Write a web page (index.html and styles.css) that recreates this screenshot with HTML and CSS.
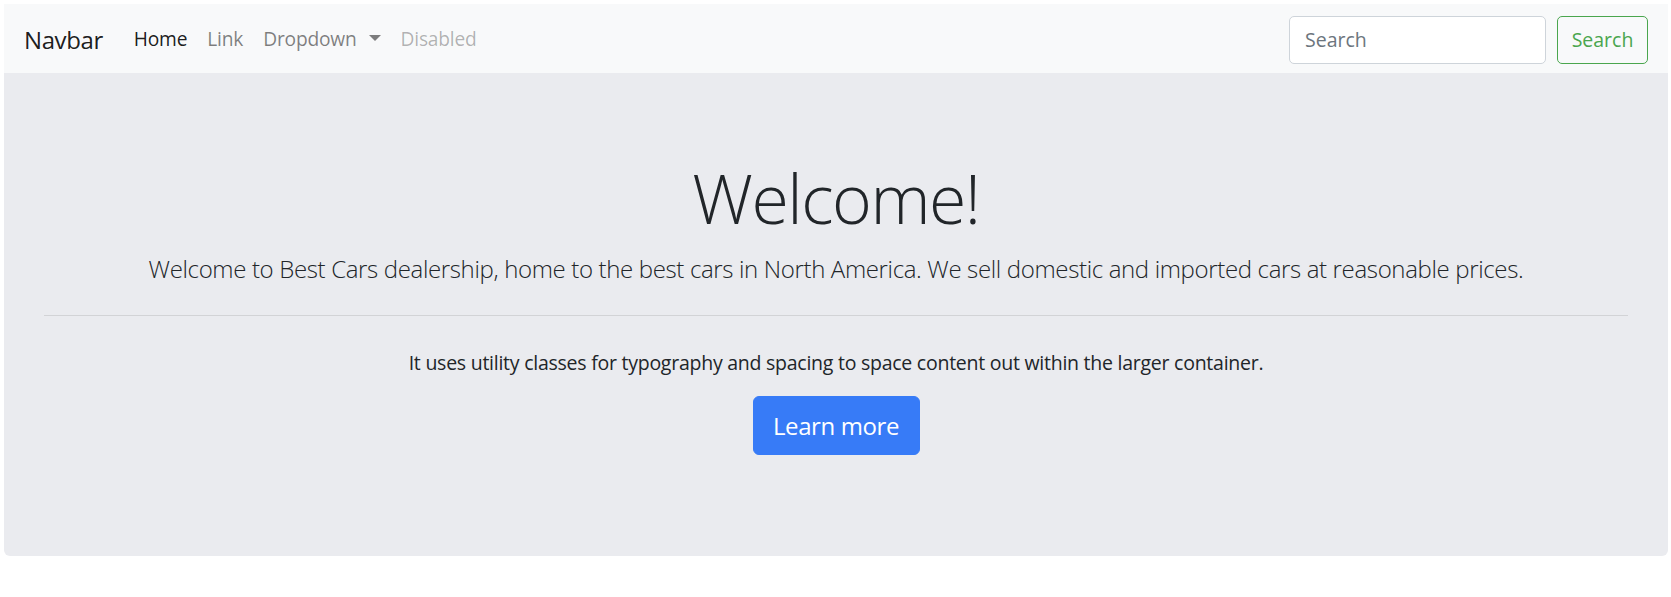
FILE: index.html
```html
<!DOCTYPE html>
<html lang="en">
<head>
<meta charset="utf-8">
<title>Best Cars</title>
<link rel="stylesheet" href="styles.css">
</head>
<body>
<nav class="navbar">
  <a class="brand" href="#">Navbar</a>
  <ul class="nav">
    <li><a class="nav-link active" href="#">Home</a></li>
    <li><a class="nav-link" href="#">Link</a></li>
    <li><a class="nav-link dropdown" href="#">Dropdown</a></li>
    <li><a class="nav-link disabled" href="#">Disabled</a></li>
  </ul>
  <form class="search">
    <input class="search-input" type="search" placeholder="Search">
    <button class="search-btn" type="button">Search</button>
  </form>
</nav>
<main class="jumbotron">
  <h1 class="display">Welcome!</h1>
  <p class="lead">Welcome to Best Cars dealership, home to the best cars in North America. We sell domestic and imported cars at reasonable prices.</p>
  <hr class="divider">
  <p class="body-text">It uses utility classes for typography and spacing to space content out within the larger container.</p>
  <p class="lead action"><a class="btn-primary" href="#">Learn more</a></p>
</main>
</body>
</html>
```

FILE: styles.css
```css
* { box-sizing: border-box; }
body {
  margin: 4px 3px 4px 4px;
  font-family: "Open Sans", "Noto Sans", sans-serif;
  font-size: 20px;
  line-height: 1.5;
  color: #212529;
  background: #fff;
}
a { text-decoration: none; }

.navbar {
  display: flex;
  align-items: center;
  background: #f8f9fa;
  padding: 10px 20px;
  height: 69px;
}
.brand {
  font-size: 24px;
  letter-spacing: -0.4px;
  line-height: 37px;
  padding: 7px 0 5px;
  margin-right: 21px;
  color: rgba(0,0,0,.9);
}
.nav {
  display: flex;
  list-style: none;
  margin: 0;
  padding: 0;
  flex: 1;
}
.nav-link {
  display: block;
  padding: 11px 10px 9px;
  font-size: 19.2px;
  letter-spacing: -0.2px;
  color: rgba(0,0,0,.5);
}
.nav-link.active { color: rgba(0,0,0,.9); }
.nav-link.disabled { color: rgba(0,0,0,.3); }
.dropdown::after {
  content: "";
  display: inline-block;
  margin-left: 12px;
  vertical-align: 5px;
  border-top: 6px solid;
  border-right: 6px solid transparent;
  border-left: 6px solid transparent;
}
.search {
  display: flex;
  align-items: center;
  gap: 11px;
  margin-top: 2px;
}
.search-input {
  width: 257px;
  height: 48px;
  padding: 7px 15px;
  font: inherit;
  font-size: 19.5px;
  color: #495057;
  background: #fff;
  border: 1px solid #ced4da;
  border-radius: 5px;
}
.search-input::placeholder { color: #6c757d; }
.search-btn {
  width: 91px;
  height: 48px;
  font: inherit;
  font-size: 19.5px;
  color: #4aa64e;
  background: transparent;
  border: 1px solid #4aa64e;
  border-radius: 5px;
  padding: 0;
}

.jumbotron {
  display: block;
  background: #eaebef;
  border-radius: 0 0 6px 6px;
  padding: 80px 40px;
  text-align: center;
  height: 483px;
}
.display {
  margin: 0 0 10px;
  padding-top: 3px;
  font-size: 68px;
  letter-spacing: -1.5px;
  font-weight: 300;
  line-height: 84px;
}
.lead {
  margin: 0 0 20px;
  font-size: 24px;
  letter-spacing: -0.35px;
  font-weight: 300;
  line-height: 37.5px;
}
.divider {
  margin: 27px 0 32px;
  border: 0;
  border-top: 1px solid rgba(0,0,0,.1);
}
.body-text {
  margin: 0 0 19px;
  font-size: 19.5px;
  letter-spacing: -0.25px;
}
.action { margin: 0; }
.btn-primary {
  display: inline-block;
  height: 59px;
  width: 167px;
  line-height: 57px;
  font-size: 24px;
  letter-spacing: -0.4px;
  font-weight: 400;
  color: #fff;
  background: #377bf7;
  border: 1px solid #377bf7;
  border-radius: 6px;
}
```
